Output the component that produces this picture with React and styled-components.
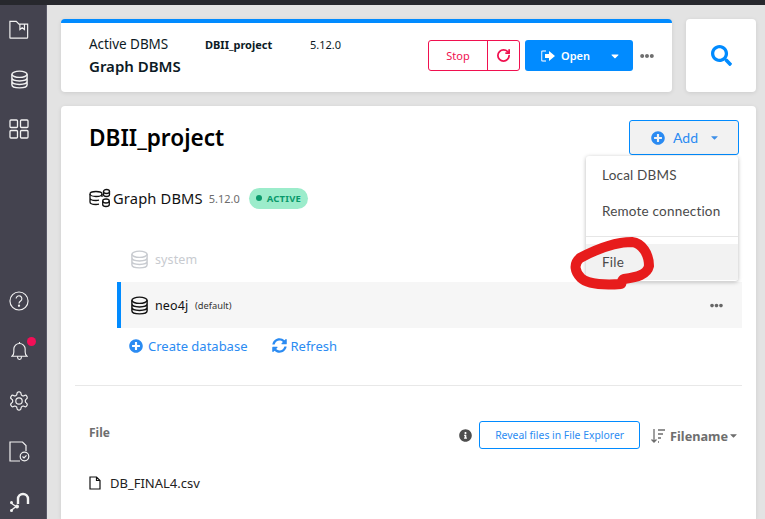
import React from "react";
import styled, { createGlobalStyle } from "styled-components";
import { FaPlusCircle, FaSyncAlt, FaSearch, FaInfoCircle, FaCaretDown, FaEllipsisH } from "react-icons/fa";
import { LuRotateCw } from "react-icons/lu";

const Global = createGlobalStyle`
  html, body { margin: 0; padding: 0; height: 100%; overflow: hidden; }
  body { font-family: "Noto Sans", "Open Sans", sans-serif; background: #e3e3e3; }
  * { box-sizing: border-box; }
`;

const Page = styled.div`
  width: 765px; height: 519px; display: flex; flex-direction: column; overflow: hidden; position: relative;
`;
const TitleStrip = styled.div`height: 5px; background: #27282d; flex: none;`;
const Body = styled.div`flex: 1; display: flex; min-height: 0;`;
const Sidebar = styled.nav`
  width: 47px; flex: none; background: #44434f; border-right: 1px solid #5a5968;
  display: flex; flex-direction: column; justify-content: space-between; align-items: center;
  padding: 12px 8px 0 0; color: #f2f2f2;
`;
const SideGroup = styled.div`display: flex; flex-direction: column; align-items: center; gap: 26px;`;
const SideBottom = styled(SideGroup)`margin-bottom: 6px;`;
const SideIcon = styled.div`position: relative; width: 24px; height: 24px; display: flex; align-items: center; justify-content: center;`;
const Dot = styled.span`position: absolute; top: -2px; right: -5px; width: 9px; height: 9px; border-radius: 50%; background: #f20f57;`;

const Content = styled.main`flex: 1; padding: 14px 9px 0 14px; display: flex; flex-direction: column; gap: 14px; min-width: 0;`;
const TopRow = styled.div`display: flex; gap: 14px; height: 73px; flex: none;`;
const ActiveCard = styled.section`
  flex: 1; background: #fff; border-top: 4px solid #018bff; border-radius: 4px;
  box-shadow: 0 1px 4px rgba(0,0,0,.1); display: flex; align-items: center; justify-content: space-between;
  padding: 0 18px 0 28px;
`;
const ActiveInfo = styled.div`display: flex; flex-direction: column; gap: 2px; color: #0c1a25; margin-bottom: 4px;`;
const InfoLine = styled.div`display: flex; align-items: baseline; font-size: 13.5px; line-height: 18px;`;
const InfoLabel = styled.span`width: 116px; letter-spacing: -.05px;`;
const InfoName = styled.span`width: 105px; font-size: 11px; font-weight: 700;`;
const InfoVersion = styled.span`font-size: 11px;`;
const InfoTitle = styled.div`font-size: 15px; font-weight: 600; line-height: 20px;`;
const Actions = styled.div`display: flex; align-items: center; margin-bottom: 4px;`;
const StopGroup = styled.div`
  display: flex; width: 92px; height: 31px; border: 1px solid #f0104f; border-radius: 3px; color: #f0104f; margin-right: 5px;
`;
const StopLabel = styled.div`width: 59px; display: flex; align-items: center; justify-content: center; font-size: 11px; border-right: 1px solid #f0104f;`;
const RestartBox = styled.div`flex: 1; display: flex; align-items: center; justify-content: center; font-size: 15px;`;
const OpenButton = styled.div`
  width: 108px; height: 31px; background: #018bff; color: #fff; border-radius: 3px; display: flex; align-items: center;
  padding: 0 12px 0 16px; font-size: 11px; font-weight: 600; gap: 6px;
`;
const OpenCaret = styled.span`margin-left: auto; display: flex; font-size: 12px;`;
const MoreDots = styled.span`display: flex; color: #6f6f6f; font-size: 14px; margin-left: 7px;`;
const SearchCard = styled.section`
  width: 70px; background: #fff; border-radius: 4px; box-shadow: 0 1px 4px rgba(0,0,0,.1);
  display: flex; align-items: center; justify-content: center; color: #018bff; font-size: 21px;
`;
const MainCard = styled.section`
  flex: 1; background: #fff; border-radius: 4px 4px 0 0; box-shadow: 0 1px 4px rgba(0,0,0,.1);
  position: relative; padding: 14px 14px 0 14px; min-height: 0;
`;
const HeaderRow = styled.div`display: flex; align-items: center; justify-content: space-between; padding: 0 3px 0 14px; height: 35px;`;
const Title = styled.h1`margin: 0; font-size: 22.6px; font-weight: 600; color: #000; line-height: 35px;`;
const AddButton = styled.div`
  width: 110px; height: 35px; background: #f2f2f2; border: 1px solid #018bff; border-radius: 3px; color: #2b8bf2;
  display: flex; align-items: center; justify-content: center; gap: 8px; padding-left: 3px; font: 400 14px "Lato", sans-serif;
`;
const AddCaret = styled.span`display: flex; font-size: 11px; margin-left: 3px; color: #3d8fe8;`;

const Menu = styled.div`
  position: absolute; left: 525px; top: 50px; width: 152px; height: 125px; background: #fff; border-radius: 3px;
  box-shadow: 0 1px 4px rgba(0,0,0,.28); font: 400 13.5px "Lato", sans-serif; color: #4a4a4a; overflow: hidden;
  display: flex; flex-direction: column;
`;
const MenuItem = styled.div`
  height: ${(p) => p.$h}px; display: flex; align-items: center; padding-left: 16px; letter-spacing: .2px;
  background: ${(p) => (p.$hover ? "#f2f2f2" : "transparent")};
`;
const MenuRule = styled.div`height: 1px; background: #e6e6e6; margin-bottom: 7px;`;
const Scribble = styled.svg`position: absolute; left: 507px; top: 130px; width: 90px; height: 56px; overflow: visible; pointer-events: none;`;

const DbmsRow = styled.div`display: flex; align-items: center; margin: 30px 0 0 14px; height: 26px; color: #111;`;
const DbmsName = styled.span`font-size: 14.7px; margin-left: 2px; letter-spacing: .15px;`;
const DbmsVersion = styled.span`font-size: 11px; color: #6c6c6c; margin-left: 6px;`;
const Badge = styled.span`
  margin-left: 9px; height: 21px; width: 59px; border-radius: 11px; background: #9ceccb; color: #0a9a6c;
  font-size: 9.5px; font-weight: 700; display: flex; align-items: center; justify-content: center; gap: 5px; letter-spacing: .2px;
`;
const BadgeDot = styled.i`width: 6px; height: 6px; border-radius: 50%; background: #0a9a6c;`;

const DbList = styled.div`margin: 25px 0 0 42px; display: flex; flex-direction: column;`;
const DbRow = styled.div`
  height: 46px; display: flex; align-items: center; gap: 5px; padding-left: 9px;
  border-left: 4px solid ${(p) => (p.$active ? "#018bff" : "transparent")};
  background: ${(p) => (p.$active ? "#f6f6f6" : "transparent")};
  color: ${(p) => (p.$active ? "#111" : "#c8cbd0")};
`;
const DbName = styled.span`font-size: 12.5px; letter-spacing: .1px; width: 21px; margin-left: 1px; white-space: nowrap;`;
const DbDefault = styled.span`font-size: 9.3px; margin-left: 14px; color: #333; flex: 1;`;
const RowDots = styled.span`display: flex; font-size: 13px; color: #666; margin-right: 19px;`;
const LinkRow = styled.div`display: flex; gap: 25px; margin: 4px 0 0 54px; height: 27px; align-items: center;`;
const Link = styled.span`display: flex; align-items: center; gap: ${(p) => p.$gap}px; color: #2b8bf2; font-size: 13px;`;
const Rule = styled.div`height: 1px; background: #e8e8e8; margin: 26px 0 0 0;`;
const FileHead = styled.div`display: flex; align-items: center; margin: 35px 0 0 14px; height: 28px;`;
const FileTitle = styled.span`font-size: 12px; font-weight: 700; color: #6e6e6e; flex: 1; margin-top: -6px;`;
const InfoGlyph = styled.span`display: flex; color: #4e4e4e; font-size: 13px; margin-right: 7px;`;
const RevealButton = styled.div`
  width: 161px; height: 28px; border: 1px solid #018bff; border-radius: 3px; color: #2b8bf2; font-size: 10.4px;
  display: flex; align-items: center; justify-content: center;
`;
const SortBox = styled.div`display: flex; align-items: center; color: #6e6e6e; margin: 1px 3px 0 10px; font-size: 12.7px; font-weight: 700;`;
const FileRow = styled.div`display: flex; align-items: center; gap: 9px; margin: 25px 0 0 14px; font-size: 13px; color: #222;`;

const Db = ({ s = 20, c = "currentColor", w = 1.5 }) => (
  <svg width={s} height={s} viewBox="0 0 20 20" fill="none" stroke={c} strokeWidth={w}>
    <ellipse cx="10" cy="4.5" rx="8" ry="3.3" />
    <path d="M2 4.5v11c0 1.9 3.6 3.3 8 3.3s8-1.4 8-3.3v-11M2 8.2c0 1.9 3.6 3.3 8 3.3s8-1.4 8-3.3M2 11.9c0 1.9 3.6 3.3 8 3.3s8-1.4 8-3.3" />
  </svg>
);

export default function App() {
  return (
    <Page>
      <Global />
      <TitleStrip />
      <Body>
        <Sidebar>
          <SideGroup>
            <SideIcon>
              <svg width="20" height="19" viewBox="0 0 22 20" fill="none" stroke="currentColor" strokeWidth="1.3">
                <path d="M1 1h7l3 3h9.5v14.500a1 1 0 0 1-1 1H1.500a.5.5 0 0 1-.5-.5z" />
                <path d="M12 4V10l2.500-2 2.500 2V4" />
              </svg>
            </SideIcon>
            <SideIcon><Db s={19} /></SideIcon>
            <SideIcon>
              <svg width="20" height="20" viewBox="0 0 20 20" fill="none" stroke="currentColor" strokeWidth="1.3">
                <rect x="1" y="1" width="7.500" height="7.500" rx="1" />
                <rect x="11.500" y="1" width="7.500" height="7.500" rx="1" />
                <rect x="1" y="11.500" width="7.500" height="7.500" rx="1" />
                <rect x="11.500" y="11.500" width="7.500" height="7.500" rx="1" />
              </svg>
            </SideIcon>
          </SideGroup>
          <SideBottom>
            <SideIcon>
              <svg width="20" height="20" viewBox="0 0 21 21" fill="none" stroke="currentColor" strokeWidth="1.2">
                <circle cx="10.500" cy="10.500" r="9.500" />
                <path d="M7.500 8a3 3 0 1 1 4.700 2.500c-1 .7-1.700 1.200-1.700 2.500" />
                <circle cx="10.500" cy="15.500" r=".6" />
              </svg>
            </SideIcon>
            <SideIcon>
              <svg width="17" height="20" viewBox="0 0 18 20" fill="none" stroke="currentColor" strokeWidth="1.2">
                <path d="M1 15.500c1.500-1 2-2 2-4.500V8a6 6 0 0 1 12 0v3c0 2.500.5 3.500 2 4.500z" />
                <path d="M9 .5v1.500M7 15.500v1.500a2 2 0 0 0 4 0v-1.500" />
              </svg>
              <Dot />
            </SideIcon>
            <SideIcon>
              <svg width="22" height="22" viewBox="0 0 24 24" fill="none" stroke="currentColor" strokeWidth="1.300">
                <path d="M12.220 2h-.44a2 2 0 0 0-2 2v.18a2 2 0 0 1-1 1.730l-.43.25a2 2 0 0 1-2 0l-.15-.08a2 2 0 0 0-2.730.73l-.22.38a2 2 0 0 0 .73 2.730l.15.1a2 2 0 0 1 1 1.720v.51a2 2 0 0 1-1 1.740l-.15.09a2 2 0 0 0-.73 2.730l.22.38a2 2 0 0 0 2.730.73l.15-.08a2 2 0 0 1 2 0l.43.25a2 2 0 0 1 1 1.730V20a2 2 0 0 0 2 2h.44a2 2 0 0 0 2-2v-.18a2 2 0 0 1 1-1.730l.43-.25a2 2 0 0 1 2 0l.15.08a2 2 0 0 0 2.730-.73l.22-.39a2 2 0 0 0-.73-2.730l-.15-.08a2 2 0 0 1-1-1.740v-.5a2 2 0 0 1 1-1.740l.15-.09a2 2 0 0 0 .73-2.730l-.22-.38a2 2 0 0 0-2.730-.73l-.15.08a2 2 0 0 1-2 0l-.43-.25a2 2 0 0 1-1-1.730V4a2 2 0 0 0-2-2z" />
                <circle cx="12" cy="12" r="3.500" />
              </svg>
            </SideIcon>
            <SideIcon>
              <svg width="21" height="21" viewBox="0 0 21 21" fill="none" stroke="currentColor" strokeWidth="1.200">
                <path d="M11 20H1V1h12.500l3.500 3.500V10" />
                <circle cx="15.500" cy="15.500" r="4.300" />
                <path d="M13.500 15.500l1.500 1.500 2.500-2.700" />
              </svg>
            </SideIcon>
            <SideIcon>
              <svg width="21" height="21" viewBox="0 0 21 21" fill="none" stroke="currentColor" strokeWidth="2.400">
                <path d="M9 13V8a5 5 0 0 1 10 0v5" />
                <path d="M2 12l5 3.500M7 15.500l-5 4" strokeWidth="1.400" />
                <circle cx="2.500" cy="11.500" r="1.500" fill="currentColor" stroke="none" />
                <circle cx="8" cy="15.500" r="2" fill="currentColor" stroke="none" />
                <circle cx="2.500" cy="19.500" r="1.500" fill="currentColor" stroke="none" />
              </svg>
            </SideIcon>
          </SideBottom>
        </Sidebar>
        <Content>
          <TopRow>
            <ActiveCard>
              <ActiveInfo>
                <InfoLine>
                  <InfoLabel>Active DBMS</InfoLabel>
                  <InfoName>DBII_project</InfoName>
                  <InfoVersion>5.12.0</InfoVersion>
                </InfoLine>
                <InfoTitle>Graph DBMS</InfoTitle>
              </ActiveInfo>
              <Actions>
                <StopGroup>
                  <StopLabel>Stop</StopLabel>
                  <RestartBox><LuRotateCw strokeWidth={2.8} /></RestartBox>
                </StopGroup>
                <OpenButton>
                  <svg width="14" height="12" viewBox="0 0 14 12">
                    <path d="M5 1H2a1.500 1.500 0 0 0-1.500 1.500v7A1.500 1.500 0 0 0 2 11h3" fill="none" stroke="#b9dcff" strokeWidth="1.600" />
                    <path d="M4 4h4V1l6 5-6 5V8H4z" fill="#fff" />
                  </svg>
                  Open
                  <OpenCaret><FaCaretDown /></OpenCaret>
                </OpenButton>
                <MoreDots><FaEllipsisH /></MoreDots>
              </Actions>
            </ActiveCard>
            <SearchCard><FaSearch /></SearchCard>
          </TopRow>
          <MainCard>
            <HeaderRow>
              <Title>DBII_project</Title>
              <AddButton>
                <FaPlusCircle size={14} />
                Add
                <AddCaret><FaCaretDown /></AddCaret>
              </AddButton>
            </HeaderRow>
            <DbmsRow>
              <svg width="22" height="20" viewBox="0 0 22 20" fill="none" stroke="#111" strokeWidth="1.300">
                <ellipse cx="7" cy="6" rx="6" ry="2.500" />
                <path d="M1 6v8c0 1.400 2.700 2.500 6 2.500 1 0 2-.1 3-.3M1 10c0 1.400 2.700 2.500 6 2.500 1 0 2-.1 3-.3M13 6v3" />
                <ellipse cx="17.500" cy="3.500" rx="3" ry="2" />
                <path d="M14.500 3.500v3c0 1.100 1.300 2 3 2s3-.9 3-2v-3" />
                <ellipse cx="17" cy="13" rx="3.300" ry="2" />
                <path d="M13.700 13v3.500c0 1.100 1.500 2 3.300 2s3.300-.9 3.300-2V13" />
              </svg>
              <DbmsName>Graph DBMS</DbmsName>
              <DbmsVersion>5.12.0</DbmsVersion>
              <Badge><BadgeDot />ACTIVE</Badge>
            </DbmsRow>
            <DbList>
              <DbRow>
                <Db s={19} />
                <DbName>system</DbName>
              </DbRow>
              <DbRow $active>
                <Db s={19} c="#111" />
                <DbName>neo4j</DbName>
                <DbDefault>(default)</DbDefault>
                <RowDots><FaEllipsisH /></RowDots>
              </DbRow>
            </DbList>
            <LinkRow>
              <Link $gap={5}><FaPlusCircle size={14} />Create database</Link>
              <Link $gap={3}><FaSyncAlt size={15} />Refresh</Link>
            </LinkRow>
            <Rule />
            <FileHead>
              <FileTitle>File</FileTitle>
              <InfoGlyph><FaInfoCircle /></InfoGlyph>
              <RevealButton>Reveal files in File Explorer</RevealButton>
              <SortBox>
                <svg width="16" height="16" viewBox="0 0 16 16" fill="none" stroke="currentColor" strokeWidth="1.300" style={{ marginRight: 4 }}>
                  <path d="M4 1v13M1.500 11.500L4 14l2.500-2.500M8 2h7M8 6h5M8 10h3M8 14h1" />
                </svg>
                Filename
                <FaCaretDown size={11} />
              </SortBox>
            </FileHead>
            <FileRow>
              <svg width="12" height="14" viewBox="0 0 12 14" fill="none" stroke="#111" strokeWidth="1.200">
                <path d="M1 1h6.500L11 4.500V13H1zM7.500 1v3.500H11" />
              </svg>
              DB_FINAL4.csv
            </FileRow>
            <Menu>
              <MenuItem $h={37}>Local DBMS</MenuItem>
              <MenuItem $h={36}>Remote connection</MenuItem>
              <MenuItem $h={7} />
              <MenuRule />
              <MenuItem $h={36} $hover>File</MenuItem>
            </Menu>
            <Scribble viewBox="0 0 90 56">
              <path d="M12 22C25 15 45 6 64 6c10 1 17 12 17 24c-2 9-12 11-25 13c-3 1-2 5-3 5C40 49 20 49 13 42C7 36 5 28 12 22" fill="none" stroke="#e71c1c" strokeWidth="10" strokeLinecap="round" strokeLinejoin="round" />
            </Scribble>
          </MainCard>
        </Content>
      </Body>
    </Page>
  );
}
